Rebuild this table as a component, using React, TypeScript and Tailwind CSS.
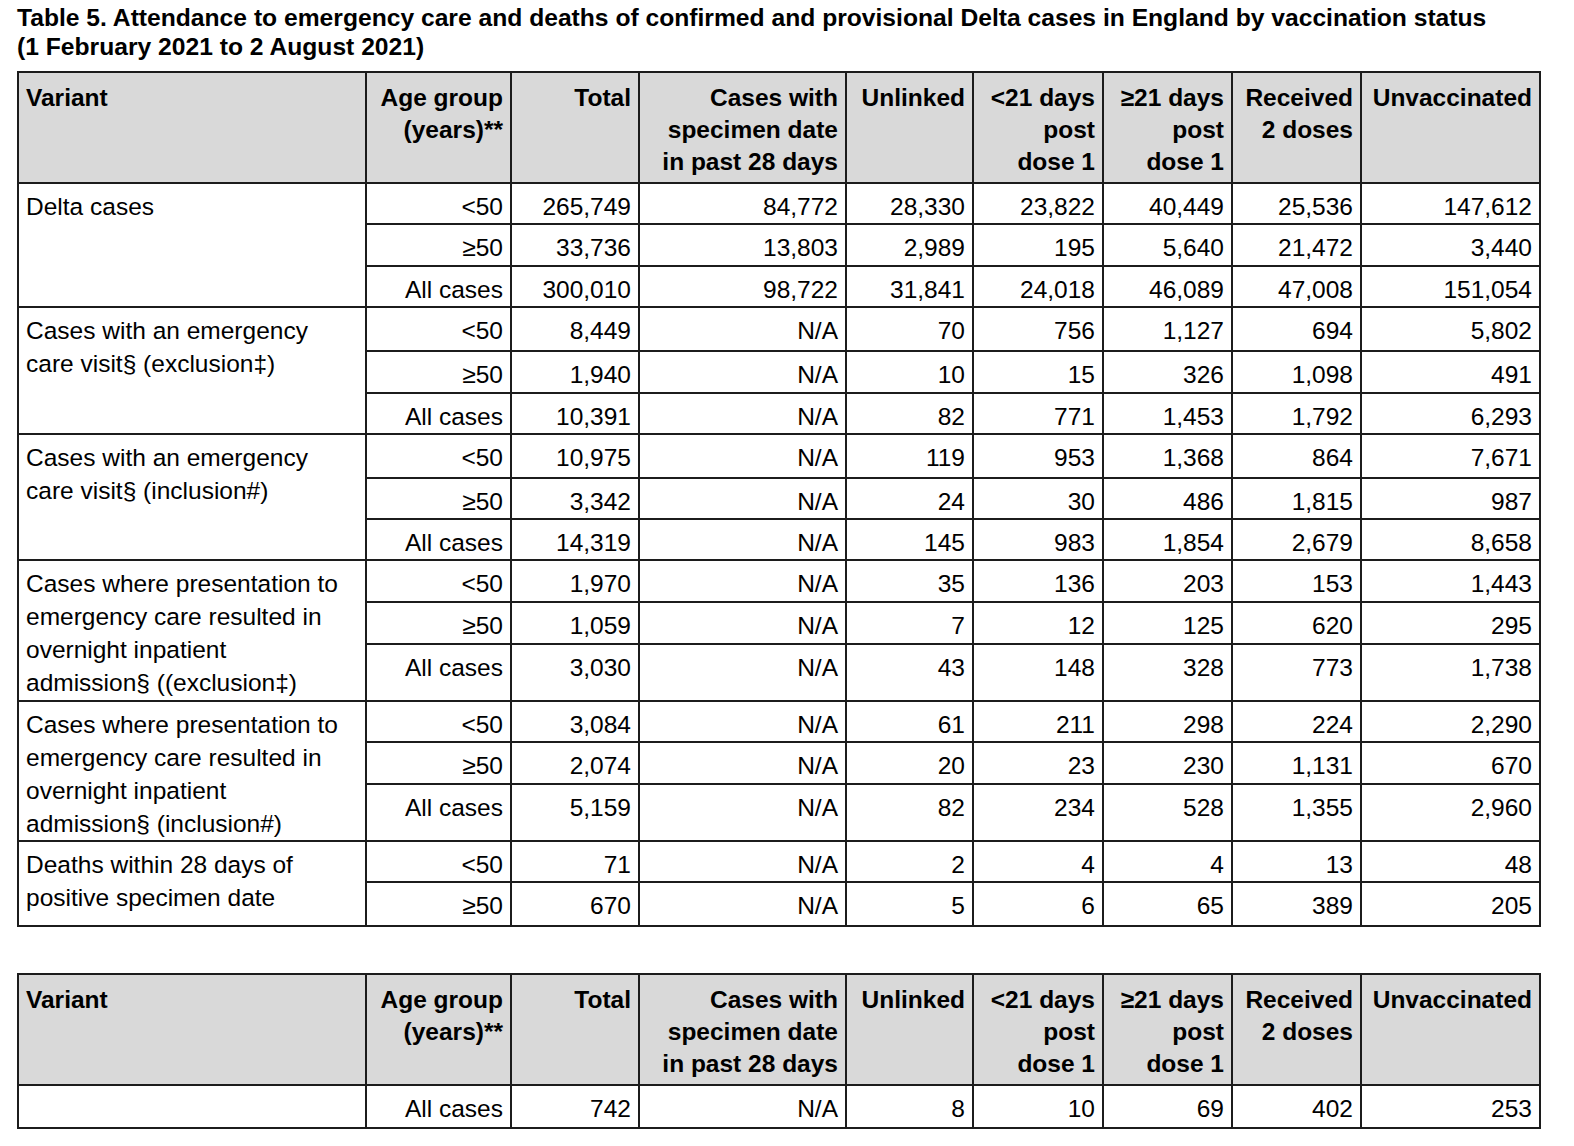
const FONT = "font-['Liberation_Sans',Arial,Helvetica,sans-serif]"

type Row = { h: string; cells: string[] }
type Group = { label: string[]; rows: Row[] }

const groups: Group[] = [
  {
    label: ['Delta cases'],
    rows: [
      { h: 'h-[41px]', cells: ['<50', '265,749', '84,772', '28,330', '23,822', '40,449', '25,536', '147,612'] },
      { h: 'h-[42px]', cells: ['≥50', '33,736', '13,803', '2,989', '195', '5,640', '21,472', '3,440'] },
      { h: 'h-[41px]', cells: ['All cases', '300,010', '98,722', '31,841', '24,018', '46,089', '47,008', '151,054'] },
    ],
  },
  {
    label: ['Cases with an emergency', 'care visit§ (exclusion‡)'],
    rows: [
      { h: 'h-[44px]', cells: ['<50', '8,449', 'N/A', '70', '756', '1,127', '694', '5,802'] },
      { h: 'h-[42px]', cells: ['≥50', '1,940', 'N/A', '10', '15', '326', '1,098', '491'] },
      { h: 'h-[41px]', cells: ['All cases', '10,391', 'N/A', '82', '771', '1,453', '1,792', '6,293'] },
    ],
  },
  {
    label: ['Cases with an emergency', 'care visit§ (inclusion#)'],
    rows: [
      { h: 'h-[44px]', cells: ['<50', '10,975', 'N/A', '119', '953', '1,368', '864', '7,671'] },
      { h: 'h-[41px]', cells: ['≥50', '3,342', 'N/A', '24', '30', '486', '1,815', '987'] },
      { h: 'h-[41px]', cells: ['All cases', '14,319', 'N/A', '145', '983', '1,854', '2,679', '8,658'] },
    ],
  },
  {
    label: ['Cases where presentation to', 'emergency care resulted in', 'overnight inpatient', 'admission§ ((exclusion‡)'],
    rows: [
      { h: 'h-[42px]', cells: ['<50', '1,970', 'N/A', '35', '136', '203', '153', '1,443'] },
      { h: 'h-[42px]', cells: ['≥50', '1,059', 'N/A', '7', '12', '125', '620', '295'] },
      { h: 'h-[57px]', cells: ['All cases', '3,030', 'N/A', '43', '148', '328', '773', '1,738'] },
    ],
  },
  {
    label: ['Cases where presentation to', 'emergency care resulted in', 'overnight inpatient', 'admission§ (inclusion#)'],
    rows: [
      { h: 'h-[41px]', cells: ['<50', '3,084', 'N/A', '61', '211', '298', '224', '2,290'] },
      { h: 'h-[42px]', cells: ['≥50', '2,074', 'N/A', '20', '23', '230', '1,131', '670'] },
      { h: 'h-[57px]', cells: ['All cases', '5,159', 'N/A', '82', '234', '528', '1,355', '2,960'] },
    ],
  },
  {
    label: ['Deaths within 28 days of', 'positive specimen date'],
    rows: [
      { h: 'h-[41px]', cells: ['<50', '71', 'N/A', '2', '4', '4', '13', '48'] },
      { h: 'h-[44px]', cells: ['≥50', '670', 'N/A', '5', '6', '65', '389', '205'] },
    ],
  },
]

const headers: string[][] = [
  ['Age group', '(years)**'],
  ['Total'],
  ['Cases with', 'specimen date', 'in past 28 days'],
  ['Unlinked'],
  ['<21 days', 'post', 'dose 1'],
  ['≥21 days', 'post', 'dose 1'],
  ['Received', '2 doses'],
  ['Unvaccinated'],
]

const cell = 'border-2 border-[#1c1c1c] align-top'
const body = 'pt-[6px] pb-0 pl-[7px] pr-[7px] leading-[33px]'

function Cols() {
  return (
    <colgroup>
      <col className="w-[348px]" />
      <col className="w-[145px]" />
      <col className="w-[128px]" />
      <col className="w-[207px]" />
      <col className="w-[127px]" />
      <col className="w-[130px]" />
      <col className="w-[129px]" />
      <col className="w-[129px]" />
      <col className="w-[179px]" />
    </colgroup>
  )
}

function HeaderRow({ h }: { h: string }) {
  return (
    <tr className={h}>
      <th className={`${cell} bg-[#d9d9d9] pt-[9px] pb-[4px] pl-[7px] pr-[7px] text-left font-bold leading-[32px]`}>
        Variant
      </th>
      {headers.map((lines, i) => (
        <th
          key={i}
          className={`${cell} bg-[#d9d9d9] pt-[9px] pb-[4px] pl-[3px] pr-[7px] text-right font-bold leading-[32px] whitespace-nowrap`}
        >
          {lines.map((l, j) => (
            <div key={j}>{l}</div>
          ))}
        </th>
      ))}
    </tr>
  )
}

export default function App() {
  return (
    <div className={`${FONT} min-h-[1146px] w-[1574px] bg-white text-black`}>
      <h1 className="pt-[4px] pl-[17px] text-[24.65px] font-bold leading-[28.5px] whitespace-nowrap">
        Table 5. Attendance to emergency care and deaths of confirmed and provisional Delta cases in England by
        vaccination status
        <br />
        (1 February 2021 to 2 August 2021)
      </h1>

      {/* Main table */}
      <table className="mt-[10px] ml-[17px] w-[1524px] table-fixed border-collapse text-[24.5px]">
        <Cols />
        <thead>
          <HeaderRow h="h-[111px]" />
        </thead>
        <tbody>
          {groups.map((g) =>
            g.rows.map((r, ri) => (
              <tr key={g.label[0] + g.label.length + ri} className={r.h}>
                {ri === 0 && (
                  <td rowSpan={g.rows.length} className={`${cell} ${body} text-left whitespace-nowrap`}>
                    {g.label.map((l, li) => (
                      <div key={li}>{l}</div>
                    ))}
                  </td>
                )}
                {r.cells.map((c, ci) => (
                  <td key={ci} className={`${cell} ${body} text-right whitespace-nowrap`}>
                    {c}
                  </td>
                ))}
              </tr>
            )),
          )}
        </tbody>
      </table>

      {/* Totals table */}
      <table className="mt-[46px] ml-[17px] w-[1524px] table-fixed border-collapse text-[24.5px]">
        <Cols />
        <thead>
          <HeaderRow h="h-[109px]" />
        </thead>
        <tbody>
          <tr className="h-[43px]">
            <td className={`${cell} ${body}`}></td>
            {['All cases', '742', 'N/A', '8', '10', '69', '402', '253'].map((c, i) => (
              <td key={i} className={`${cell} ${body} text-right whitespace-nowrap`}>
                {c}
              </td>
            ))}
          </tr>
        </tbody>
      </table>
    </div>
  )
}
